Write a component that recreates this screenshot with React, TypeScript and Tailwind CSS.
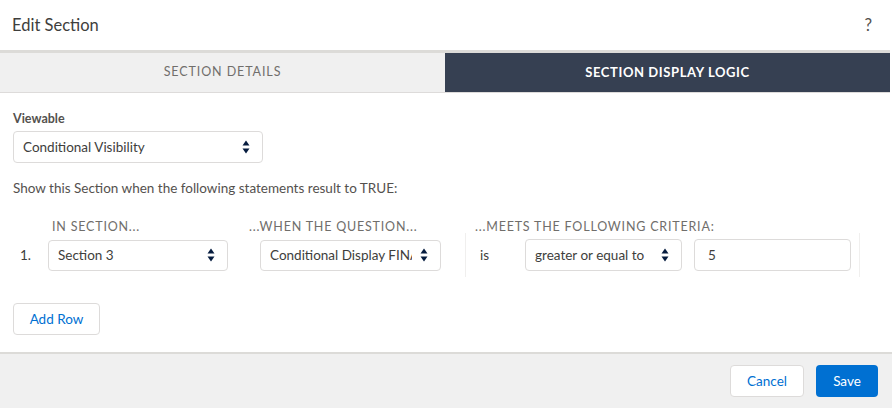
import React from 'react';

const font = { fontFamily: 'Lato, "Open Sans", Arial, sans-serif' };

const Arrows: React.FC = () => (
  <svg width="8" height="14" viewBox="0 0 8 14" className="shrink-0">
    <path d="M4 0.5 L7.5 5.5 L0.5 5.5 Z" fill="#061c3f" />
    <path d="M4 13.5 L7.5 8.5 L0.5 8.5 Z" fill="#061c3f" />
  </svg>
);

const FakeSelect: React.FC<{ value: string; className: string }> = ({ value, className }) => (
  <div
    className={`flex items-center gap-[8px] border border-[#dddbda] rounded-[4px] bg-white pl-[9px] pr-[12px] text-[13.5px] text-[#3e3e3c] ${className}`}
  >
    <span className="flex-1 whitespace-nowrap overflow-hidden">{value}</span>
    <Arrows />
  </div>
);

export default function App() {
  return (
    <div style={font} className="w-[892px] h-[408px] bg-white flex flex-col overflow-hidden">
      {/* Header */}
      <div className="h-[50px] flex items-center justify-between pl-[12px] pr-[20px] shrink-0">
        <h1 className="text-[16.5px] text-[#3e3e3c]">Edit Section</h1>
        <span className="text-[17px] text-[#54514e]">?</span>
      </div>
      <div className="h-[3px] bg-[#dcdbd8] w-[890px] shrink-0" />

      {/* Tabs */}
      <div className="flex w-[890px] h-[40px] border-b border-[#dddbda] shrink-0">
        <div className="w-[445px] bg-[#f0f0f0] flex items-center justify-center text-[12.5px] tracking-[0.9px] text-[#706e6b]">
          SECTION DETAILS
        </div>
        <div className="flex-1 bg-[#364052] flex items-center justify-center text-[13px] font-bold tracking-[0.6px] text-white">
          SECTION DISPLAY LOGIC
        </div>
      </div>

      {/* Body */}
      <div className="flex-1 pl-[13px] pt-[18px]">
        <div className="text-[12.5px] font-bold text-[#54514e] leading-[16px]">Viewable</div>
        <FakeSelect value="Conditional Visibility" className="w-[250px] h-[32px] mt-[4px]" />
        <p className="text-[13.5px] text-[#54514e] mt-[17px] leading-[16px]">
          Show this Section when the following statements result to TRUE:
        </p>

        <div className="flex mt-[23px] text-[12.5px] tracking-[0.8px] text-[#706e6b] leading-[16px]">
          <div className="w-[236px] shrink-0 pl-[39px]">IN SECTION...</div>
          <div className="w-[226px] shrink-0">...WHEN THE QUESTION...</div>
          <div className="shrink-0">...MEETS THE FOLLOWING CRITERIA:</div>
        </div>

        <div className="flex items-center h-[44px] mt-[-2px]">
          <span className="w-[35px] pl-[7px] text-[13.5px] text-[#3e3e3c]">1.</span>
          <FakeSelect value="Section 3" className="w-[180px] h-[31px]" />
          <div className="w-[32px]" />
          <FakeSelect value="Conditional Display FINAL" className="w-[181px] h-[31px] pr-[12px]" />
          <div className="w-[24px]" />
          <div className="h-[44px] w-px bg-[#f0efee]" />
          <span className="w-[59px] pl-[14px] text-[13.5px] text-[#3e3e3c]">is</span>
          <FakeSelect value="greater or equal to" className="w-[157px] h-[32px]" />
          <div className="w-[12px]" />
          <div className="w-[157px] h-[32px] border border-[#dddbda] rounded-[4px] flex items-center pl-[13px] text-[13.5px] text-[#3e3e3c]">
            5
          </div>
          <div className="w-[8px]" />
          <div className="h-[44px] w-px bg-[#f0efee]" />
        </div>

        <button className="mt-[26px] w-[87px] h-[32px] border border-[#dddbda] rounded-[4px] bg-white text-[13.5px] text-[#0070d2]">
          Add Row
        </button>
      </div>

      {/* Footer */}
      <div className="h-[2px] bg-[#dcdbd8] shrink-0" />
      <div className="h-[54px] bg-[#f0f0f0] flex items-center justify-end gap-[12px] pr-[14px] shrink-0">
        <button className="w-[74px] h-[32px] border border-[#dddbda] rounded-[4px] bg-white text-[13.5px] text-[#0070d2]">
          Cancel
        </button>
        <button className="w-[62px] h-[32px] rounded-[4px] bg-[#0070d2] text-[13.5px] text-white">
          Save
        </button>
      </div>
    </div>
  );
}
